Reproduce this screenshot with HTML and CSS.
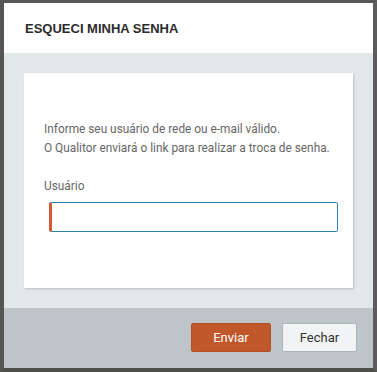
FILE: index.html
```html
<!DOCTYPE html>
<html lang="pt-BR">
<head>
<meta charset="utf-8">
<title>Esqueci minha senha</title>
<link rel="stylesheet" href="styles.css">
</head>
<body>
<div class="modal">
  <div class="modal-header">
    <h1 class="modal-title">ESQUECI MINHA SENHA</h1>
  </div>
  <div class="modal-body">
    <div class="card">
      <p class="info">Informe seu usuário de rede ou e-mail válido.<br>O Qualitor enviará o link para realizar a troca de senha.</p>
      <label class="field-label" for="usuario">Usuário</label>
      <input class="field-input" id="usuario" type="text">
    </div>
  </div>
  <div class="modal-footer">
    <button class="btn btn-primary" type="button">Enviar</button>
    <button class="btn btn-secondary" type="button">Fechar</button>
  </div>
</div>
</body>
</html>
```

FILE: styles.css
```css
* { box-sizing: border-box; }
html, body { margin: 0; padding: 0; }
body {
  width: 377px;
  height: 372px;
  background: #555;
  font-family: Roboto, "Liberation Sans", sans-serif;
}
.modal {
  width: 377px;
  height: 372px;
  border-style: solid;
  border-color: #575757 #5c5c5c #4e4e4c #565654;
  border-width: 3px 4px 4px 4px;
  display: flex;
  flex-direction: column;
}
.modal-header {
  height: 50px;
  background: #fff;
  display: flex;
  align-items: center;
  padding-left: 21px;
  flex: none;
}
.modal-title {
  margin: 0;
  font-family: "Liberation Sans", Arial, sans-serif;
  font-weight: bold;
  font-size: 13px;
  color: #2b2b2b;
}
.modal-body {
  height: 255px;
  flex: none;
  background: #e2e7ea;
  padding: 20px 20px 0 20px;
}
.card {
  background: #fff;
  height: 215px;
  box-shadow: 1px 1px 2px rgba(0,0,0,0.18);
  padding: 47px 20px 0 20px;
  display: flex;
  flex-direction: column;
  align-items: flex-start;
}
.info {
  margin: 0;
  font-size: 11.85px;
  line-height: 19px;
  color: #666;
  white-space: nowrap;
}
.field-label {
  margin-top: 19px;
  font-size: 11.85px;
  line-height: 19px;
  color: #666;
}
.field-input {
  margin: 6px 0 0 5px;
  width: 289px;
  height: 30px;
  border: 1px solid #2a80b0;
  border-left: 3px solid #d05a36;
  border-radius: 2px;
  background: #fff;
  outline: none;
  padding: 0 6px;
  font-family: inherit;
  font-size: 12px;
}
.modal-footer {
  flex: 1;
  background: #bec5c8;
  display: flex;
  justify-content: flex-end;
  align-items: flex-start;
  padding: 15px 16px 0 0;
  gap: 11px;
}
.btn {
  height: 29px;
  border-radius: 2px;
  font-family: Roboto, "Liberation Sans", sans-serif;
  font-size: 13px;
  cursor: pointer;
  padding: 0;
}
.btn-primary {
  width: 80px;
  background: #c0582b;
  border: 1px solid #b04e24;
  color: #fff;
}
.btn-secondary {
  width: 75px;
  background: #f1f3f4;
  border: 1px solid #a9b6bf;
  color: #333;
}
```
